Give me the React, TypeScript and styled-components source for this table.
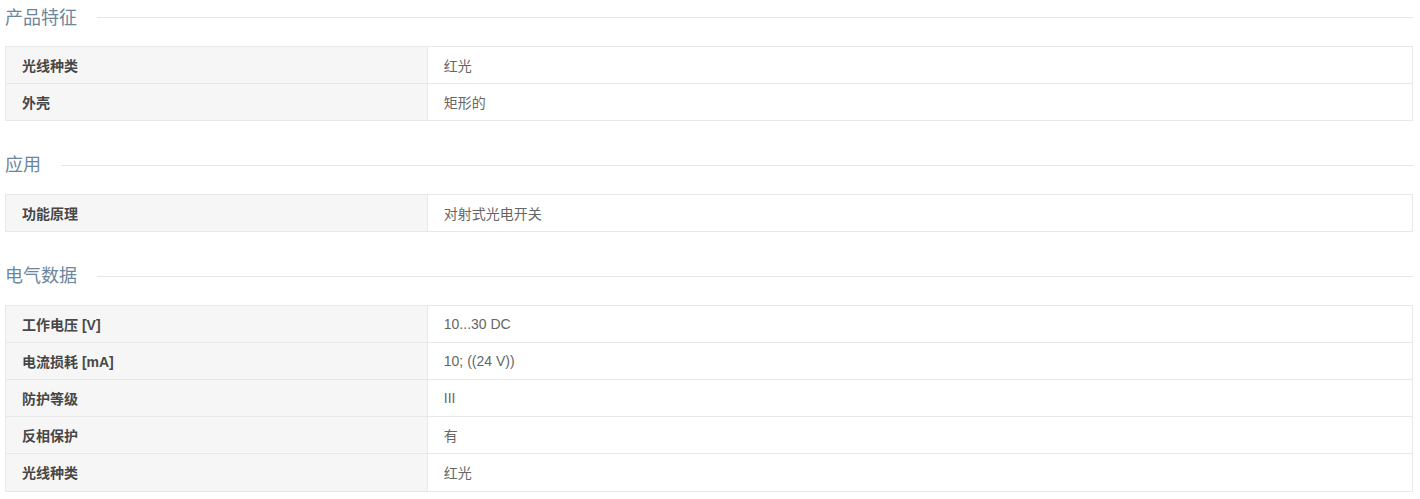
import React from "react";
import styled, { createGlobalStyle } from "styled-components";

const GlobalStyle = createGlobalStyle`
  html, body { margin: 0; padding: 0; background: #ffffff; }
  body { font-family: "Liberation Sans", Arial, "Noto Sans CJK SC", sans-serif; }
`;

const Page = styled.div`
  padding: 1px 7px 0 5px;
`;

const Section = styled.section`
  margin-bottom: 27.5px;
`;

const Heading = styled.div`
  display: flex;
  align-items: center;
  gap: 20px;
  height: 33px;
  margin-bottom: 12px;
  &::after {
    content: "";
    flex: 1;
    height: 1px;
    background: #e6e6e6;
  }
`;

const HeadingText = styled.h3`
  margin: 0;
  font-size: 18px;
  font-weight: 400;
  color: #6c869b;
  font-family: "Liberation Sans", "Noto Sans CJK SC", sans-serif;
  line-height: 1;
`;

const Table = styled.div`
  border: 1px solid #e8e8e8;
  border-bottom: none;
`;

const Row = styled.div`
  display: grid;
  grid-template-columns: 30% 1fr;
  height: 37.2px;
  border-bottom: 1px solid #e8e8e8;
  box-sizing: border-box;
`;

const Label = styled.div`
  display: flex;
  align-items: center;
  padding-left: 16px;
  background: #f6f6f6;
  border-right: 1px solid #e8e8e8;
  font-size: 14px;
  font-weight: 700;
  color: #474747;
  font-family: "Liberation Sans", "Noto Sans CJK SC", sans-serif;
`;

const Value = styled.div`
  display: flex;
  align-items: center;
  padding-left: 16px;
  font-size: 14px;
  color: #666666;
  font-family: "Liberation Sans", "Noto Sans CJK SC", sans-serif;
`;

type Item = [string, string];

const sections: { title: string; rows: Item[] }[] = [
  {
    title: "产品特征",
    rows: [
      ["光线种类", "红光"],
      ["外壳", "矩形的"],
    ],
  },
  {
    title: "应用",
    rows: [["功能原理", "对射式光电开关"]],
  },
  {
    title: "电气数据",
    rows: [
      ["工作电压 [V]", "10...30 DC"],
      ["电流损耗 [mA]", "10; ((24 V))"],
      ["防护等级", "III"],
      ["反相保护", "有"],
      ["光线种类", "红光"],
    ],
  },
];

export default function App() {
  return (
    <>
      <GlobalStyle />
      <Page>
        {sections.map((s) => (
          <Section key={s.title}>
            <Heading>
              <HeadingText>{s.title}</HeadingText>
            </Heading>
            <Table>
              {s.rows.map(([k, v], i) => (
                <Row key={i}>
                  <Label>{k}</Label>
                  <Value>{v}</Value>
                </Row>
              ))}
            </Table>
          </Section>
        ))}
      </Page>
    </>
  );
}
